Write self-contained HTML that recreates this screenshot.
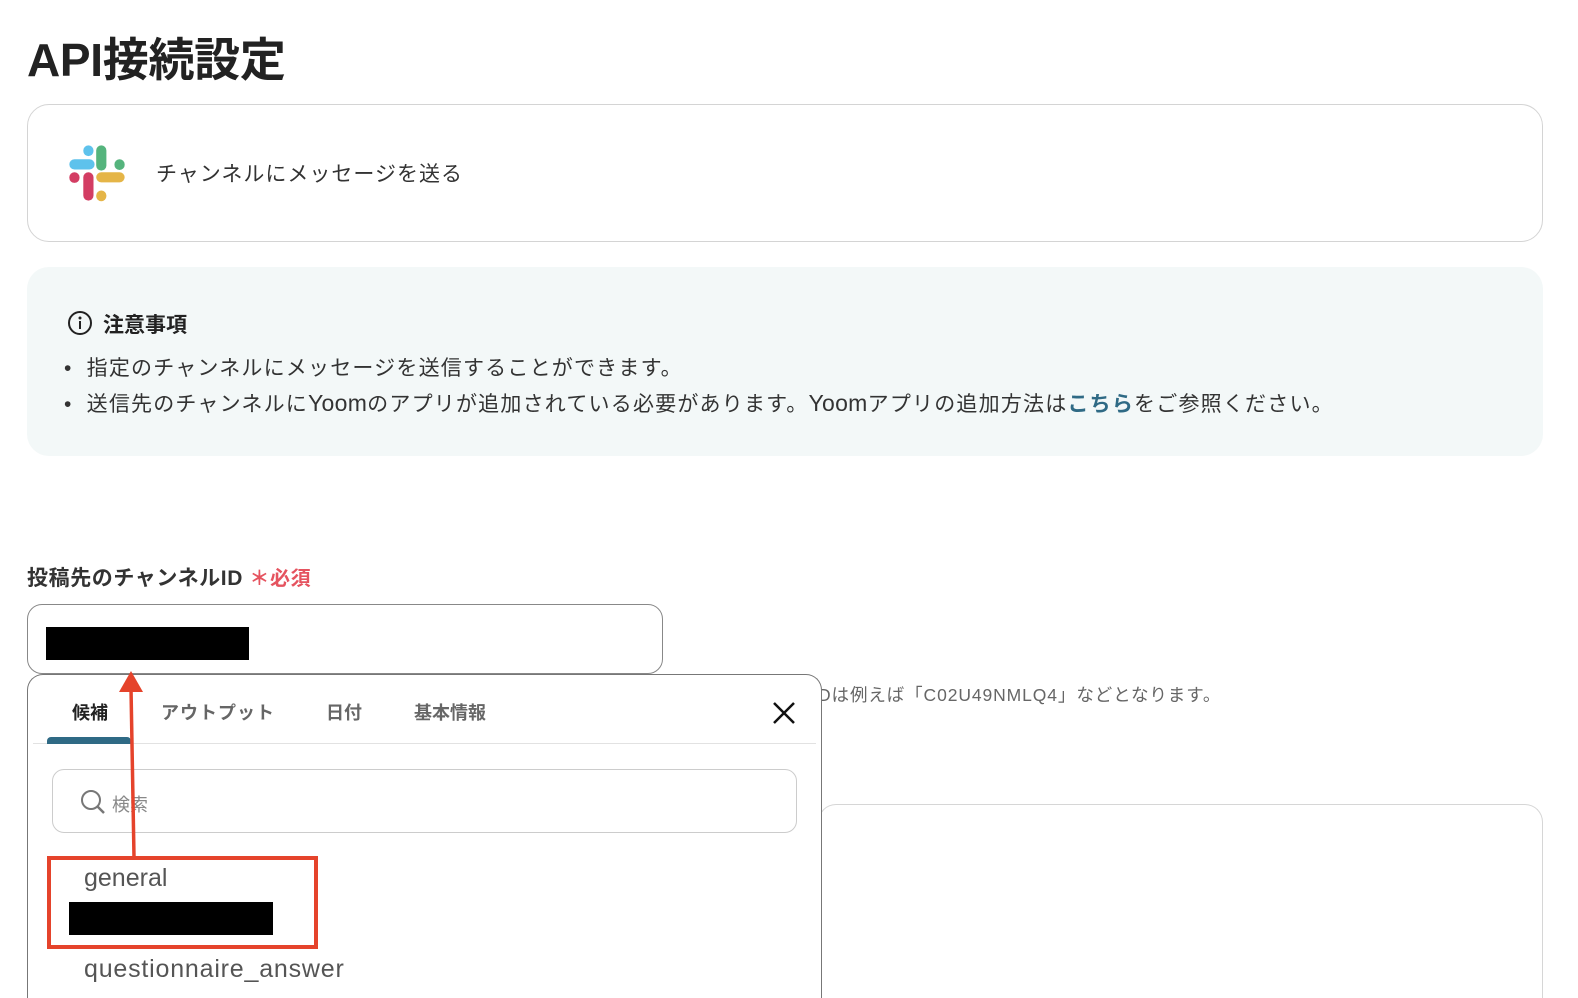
<!DOCTYPE html>
<html><head><meta charset="utf-8"><style>
*{box-sizing:border-box;margin:0;padding:0}
html,body{width:1578px;height:998px;overflow:hidden}
body{background:#fff;font-family:"Liberation Sans","Noto Sans CJK JP",sans-serif;color:#222;position:relative}
.a{position:absolute}
</style></head><body>
<div class="a" style="left:27px;top:24px;font-size:46px;font-weight:bold;letter-spacing:-0.3px;color:#222">API接続設定</div>
<div class="a" style="left:27px;top:104px;width:1516px;height:138px;border:1px solid #d4d4d4;border-radius:22px"></div>
<svg class="a" style="left:68px;top:144px" width="58" height="58" viewBox="0 0 54 54">
<g stroke-linecap="round" stroke-width="9.5" fill="none">
<line x1="6" y1="19" x2="20" y2="19" stroke="#5ec2ec"/><line x1="19" y1="6" x2="19" y2="6.5" stroke="#5ec2ec"/>
<line x1="31" y1="6" x2="31" y2="20" stroke="#55b47d"/><line x1="48" y1="19" x2="48" y2="19.5" stroke="#55b47d"/>
<line x1="6" y1="31" x2="6" y2="31.5" stroke="#d33d63"/><line x1="19" y1="31" x2="19" y2="48" stroke="#d33d63"/>
<line x1="31" y1="31" x2="48" y2="31" stroke="#e5b547"/><line x1="31" y1="48" x2="31" y2="48.5" stroke="#e5b547"/>
</g></svg>
<div class="a" style="left:156px;top:158px;font-size:21px;letter-spacing:1px;color:#333">チャンネルにメッセージを送る</div>
<div class="a" style="left:27px;top:267px;width:1516px;height:189px;background:#f3f8f8;border-radius:22px"></div>
<svg class="a" style="left:67px;top:310px" width="26" height="26" viewBox="0 0 26 26"><circle cx="13" cy="13" r="11" fill="none" stroke="#222" stroke-width="2"/><circle cx="13" cy="8" r="1.5" fill="#222"/><rect x="12" y="11" width="2" height="8" fill="#222"/></svg>
<div class="a" style="left:103px;top:309px;font-size:21px;font-weight:bold">注意事項</div>
<div class="a" style="left:64px;top:352px;font-size:21px;letter-spacing:1.2px;color:#333;line-height:34px">
<div>•&nbsp; 指定のチャンネルにメッセージを送信することができます。</div>
<div>•&nbsp; 送信先のチャンネルに<span style="font-size:23px;letter-spacing:0.3px">Yoom</span>のアプリが追加されている必要があります。<span style="font-size:23px;letter-spacing:0.3px">Yoom</span>アプリの追加方法は<span style="color:#2f6a85;font-weight:bold">こちら</span>をご参照ください。</div>
</div>
<div class="a" style="left:27px;top:562px;font-size:21px;font-weight:bold;letter-spacing:0.6px;color:#333">投稿先のチャンネルID <span style="color:#e5535f;font-size:20px">＊必須</span></div>
<div class="a" style="left:27px;top:604px;width:636px;height:70px;border:1px solid #888;border-radius:15px"></div>
<div class="a" style="left:46px;top:627px;width:203px;height:33px;background:#000"></div>
<div class="a" style="left:818px;top:682px;font-size:17.5px;letter-spacing:0.9px;color:#666">Dは例えば「C02U49NMLQ4」などとなります。</div>
<div class="a" style="left:818px;top:804px;width:725px;height:194px;border:1px solid #d6d6d6;border-bottom:none;border-radius:18px 18px 0 0"></div>
<div class="a" style="left:27px;top:674px;width:795px;height:324px;border:1px solid #777;border-bottom:none;border-radius:16px 16px 0 0;background:#fff"></div>
<div class="a" style="left:72px;top:699px;font-size:18px;font-weight:bold;color:#222">候補</div>
<div class="a" style="left:161px;top:699px;font-size:18px;font-weight:bold;color:#666;letter-spacing:1px">アウトプット</div>
<div class="a" style="left:326px;top:699px;font-size:18px;font-weight:bold;color:#666">日付</div>
<div class="a" style="left:414px;top:699px;font-size:18px;font-weight:bold;color:#666">基本情報</div>
<svg class="a" style="left:772px;top:701px" width="24" height="24" viewBox="0 0 24 24"><path d="M2 2L22 22M22 2L2 22" stroke="#111" stroke-width="2.5"/></svg>
<div class="a" style="left:33px;top:743px;width:783px;height:1px;background:#e2e2e2"></div>
<div class="a" style="left:47px;top:737px;width:84px;height:7px;background:#2f6a85;border-radius:4px 4px 0 0"></div>
<div class="a" style="left:52px;top:769px;width:745px;height:64px;border:1px solid #ccc;border-radius:12px"></div>
<svg class="a" style="left:79px;top:788px" width="28" height="28" viewBox="0 0 28 28"><circle cx="12" cy="12" r="9" fill="none" stroke="#777" stroke-width="2"/><path d="M18.5 18.5L25 25" stroke="#777" stroke-width="2.5"/></svg>
<div class="a" style="left:112px;top:791px;font-size:18px;color:#888">検索</div>
<div class="a" style="left:84px;top:864px;font-size:25px;color:#555">general</div>
<div class="a" style="left:69px;top:902px;width:204px;height:33px;background:#000"></div>
<div class="a" style="left:84px;top:955px;font-size:25px;color:#555;letter-spacing:0.8px">questionnaire_answer</div>
<div class="a" style="left:47px;top:856px;width:271px;height:93px;border:4px solid #e5432b"></div>
<svg class="a" style="left:0;top:0" width="1578" height="998"><path d="M134 857L131 688" stroke="#e5432b" stroke-width="3.5"/><path d="M119 692L131 671L143 692Z" fill="#e5432b"/></svg>
</body></html>
